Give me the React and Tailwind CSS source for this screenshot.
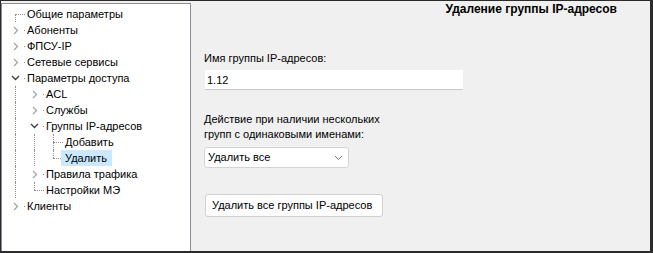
import React from "react";

const tree = [
  { label: "Общие параметры", depth: 0, lines: [], first: true, last: false },
  { label: "Абоненты", depth: 0, lines: [], kids: "closed" },
  { label: "ФПСУ-IP", depth: 0, lines: [], kids: "closed" },
  { label: "Сетевые сервисы", depth: 0, lines: [], kids: "closed" },
  { label: "Параметры доступа", depth: 0, lines: [], kids: "open" },
  { label: "ACL", depth: 1, lines: [true], kids: "closed", first: true },
  { label: "Службы", depth: 1, lines: [true], kids: "closed" },
  { label: "Группы IP-адресов", depth: 1, lines: [true], kids: "open" },
  { label: "Добавить", depth: 2, lines: [true, true], first: true },
  { label: "Удалить", depth: 2, lines: [true, true], last: true, selected: true },
  { label: "Правила трафика", depth: 1, lines: [true], kids: "closed" },
  { label: "Настройки МЭ", depth: 1, lines: [true], last: true },
  { label: "Клиенты", depth: 0, lines: [], kids: "closed", last: true },
];

function Chevron({ open }) {
  if (open) {
    return (
      <svg width="9" height="6" viewBox="0 0 9 6" className="mt-[-1px] ml-[-2px]">
        <path d="M1 1 L4.5 4.5 L8 1" fill="none" stroke="#3c3c3c" strokeWidth="1.3" />
      </svg>
    );
  }
  return (
    <svg width="6" height="9" viewBox="0 0 6 9" className="ml-[-1px]">
      <path d="M1 1 L4.5 4.5 L1 8" fill="none" stroke="#a6a6a6" strokeWidth="1.3" />
    </svg>
  );
}

function Cell({ children }) {
  return <div className="relative w-[19px] h-4 shrink-0">{children}</div>;
}

function TreeRow({ item }) {
  return (
    <div className="flex h-4 items-stretch">
      {item.lines.map((on, i) => (
        <Cell key={i}>
          {on && <div className="absolute left-[9px] top-0 h-4 border-l border-dotted border-[#8f8f8f]" />}
        </Cell>
      ))}
      <Cell>
        {!item.first || item.depth > 0 ? (
          <div className="absolute left-[9px] top-0 h-2 border-l border-dotted border-[#8f8f8f]" />
        ) : null}
        {!item.last && (
          <div className="absolute left-[9px] top-2 h-2 border-l border-dotted border-[#8f8f8f]" />
        )}
        <div className="absolute left-[9px] top-2 w-[10px] border-t border-dotted border-[#8f8f8f]" />
        {item.kids && (
          <div className="absolute left-[3px] top-0 w-[14px] h-4 bg-white flex items-center justify-center">
            <Chevron open={item.kids === "open"} />
          </div>
        )}
      </Cell>
      <div
        className={
          "relative -ml-[2px] pl-1 pr-[5px] leading-4 whitespace-nowrap text-black " +
          (item.selected ? "bg-[#cce8ff]" : "")
        }
      >
        {item.label}
      </div>
    </div>
  );
}

export default function App() {
  return (
    <div
      className="w-[653px] h-[253px] flex bg-[#f0f0f0] border-t border-l border-r-[3px] border-b-2 border-[#2b2b2b] text-[11px] text-black"
      style={{ fontFamily: '"Liberation Sans", Arial, sans-serif' }}
    >
      <div className="w-[190px] mt-[2px] bg-white border-l border-t border-r border-[#8c8c98] pt-[2px] pl-1">
        {tree.map((item) => (
          <TreeRow key={item.label} item={item} />
        ))}
      </div>
      <div className="flex-1 flex flex-col pl-[13px]">
        <div className="flex justify-end pr-[33px] font-bold text-[12px] leading-[14px] pt-px">
          Удаление группы IP-адресов
        </div>
        <div className="mt-[35px] leading-[14px]">Имя группы IP-адресов:</div>
        <div className="mt-[5px] ml-px w-[258px] h-5 bg-white border-b border-[#c8c8c8] pl-[2px] leading-5">
          1.12
        </div>
        <div className="mt-[22px] leading-[15px]">
          Действие при наличии нескольких
          <br />
          групп с одинаковыми именами:
        </div>
        <div className="mt-[5px] w-[145px] h-[21px] bg-white border border-[#d4d4d4] rounded-[3px] flex items-center justify-between pl-[3px] pr-[5px]">
          <span>Удалить все</span>
          <svg width="9" height="6" viewBox="0 0 9 6">
            <path d="M1 1 L4.5 4.5 L8 1" fill="none" stroke="#7a7a7a" strokeWidth="1" />
          </svg>
        </div>
        <div className="mt-[26px] ml-px">
          <button className="h-[23px] pl-[6px] pr-[10px] bg-[#fdfdfd] border border-[#d0d0d0] rounded-[3px] leading-[21px]">
            Удалить все группы IP-адресов
          </button>
        </div>
      </div>
    </div>
  );
}
